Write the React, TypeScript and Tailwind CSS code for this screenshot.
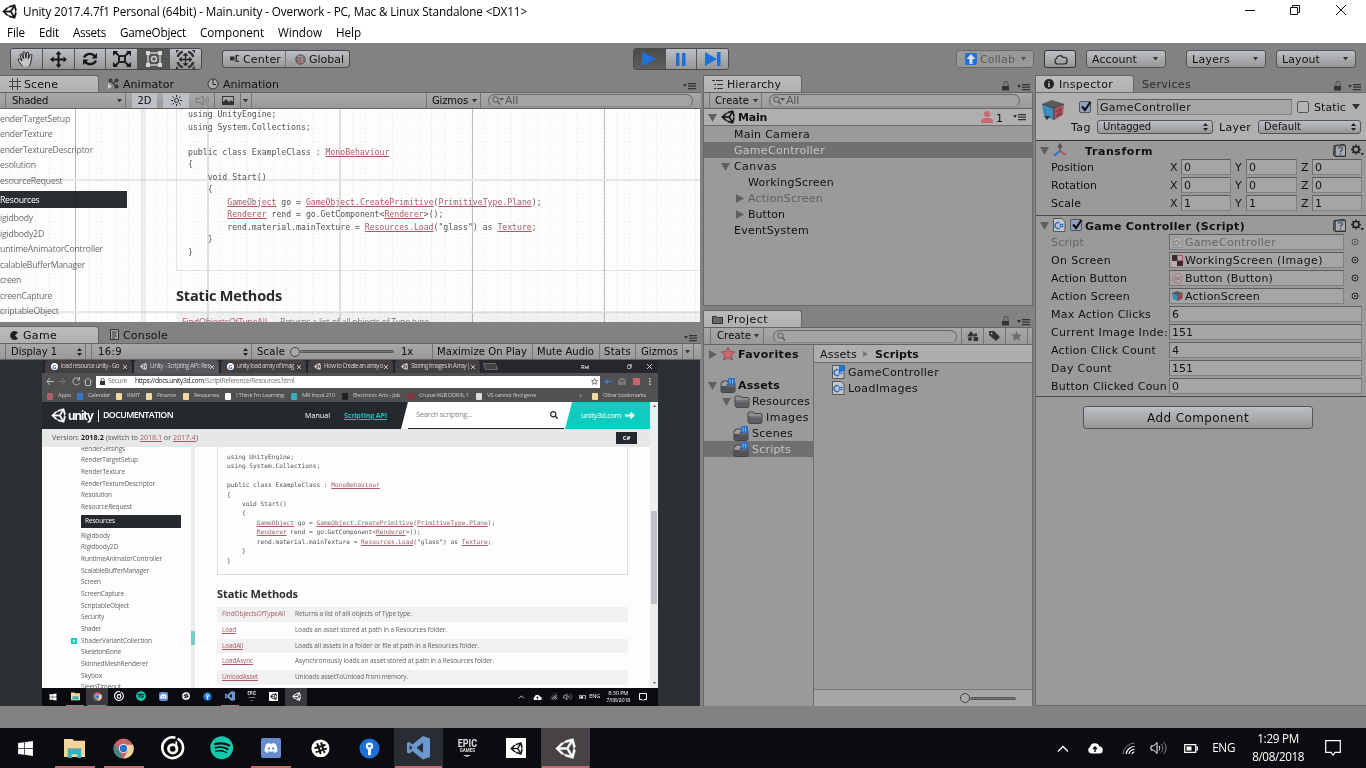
import React, { useLayoutEffect, useRef } from "react";
import { FaSpotify, FaDiscord, FaSearch, FaWindows } from "react-icons/fa";

/* Text set to a fixed measure by adjusting its tracking. */
function Fit({ w, c = "", u = false, children }: { w: number; c?: string; u?: boolean; children: string }) {
  const ref = useRef<HTMLSpanElement>(null);
  useLayoutEffect(() => {
    const el = ref.current;
    if (!el) return;
    el.style.letterSpacing = "0px";
    const natural = el.getBoundingClientRect().width;
    el.style.letterSpacing = (w - natural) / children.length + "px";
  }, [w, children]);
  return (
    <span className={"block shrink-0 whitespace-pre " + c} style={{ width: w }}>
      <span ref={ref} className={u ? "inline-block underline" : "inline-block"}>{children}</span>
    </span>
  );
}

type IconProps = { w: number; h?: number; vb?: string; c?: string; children: React.ReactNode };
function Svg({ w, h = w, vb, c = "", children }: IconProps) {
  return (
    <svg className={"block shrink-0 " + c} width={w} height={h} viewBox={vb ?? `0 0 ${w} ${h}`} fill="none" stroke="none">
      {children}
    </svg>
  );
}

const UNITY =
  "M498.11 206.4L445.31 14.72 248.2 66.08 219 116.14l-59.2-.43L15.54 256l144.28 140.32 59.17-.43 29.24 50 197.08 51.36 52.8-191.62-30-49.63zM223.77 124.2L374.55 86.51 288 232.33H114.87zm0 263.63l-108.9-108.16H288l86.55 145.81zm193 14L330.17 256l86.58-145.84L458.56 256z";
function Unity({ w, c = "", fill = "#111" }: { w: number; c?: string; fill?: string }) {
  return (
    <Svg w={w} vb="0 0 512 512" c={c}>
      <path d={UNITY} fill={fill} stroke={fill} strokeWidth="10" />
    </Svg>
  );
}
const Down = ({ c = "", w = 5 }: { c?: string; w?: number }) => (
  <Svg w={w} h={w * 0.7} vb="0 0 10 7" c={c}><path d="M0 0h10L5 7z" fill="#333" /></Svg>
);
const UpDown = ({ c = "" }: { c?: string }) => (
  <Svg w={5} h={8} c={c}><path d="M2.5 0L5 3H0zM2.5 8L5 5H0z" fill="#222" /></Svg>
);
const Fold = ({ open = false, c = "" }: { open?: boolean; c?: string }) => (
  <Svg w={9} c={c}><path d={open ? "M0 1h9L4.500 9z" : "M1 0v9L9 4.500z"} fill="#606060" /></Svg>
);
const Menu = ({ c = "" }: { c?: string }) => (
  <Svg w={13} h={7} c={c}><path d="M0 1h4L2 4zM5 0h8v1.200H5zM5 2.500h8v1.200H5zM5 5h8v1.200H5z" fill="#333" /></Svg>
);
const Lock = ({ c = "" }: { c?: string }) => (
  <Svg w={9} h={10} c={c}><path d="M3 5V2.500a2 2 0 0 1 4 0V5" stroke="#555" strokeWidth="1.200" /><path d="M1 5h7v4.500H1z" fill="#333" /></Svg>
);
const Mag = ({ c = "", arrow = true }: { c?: string; arrow?: boolean }) => (
  <Svg w={13} h={9} c={c}>
    <circle cx="3.500" cy="3.500" r="2.700" stroke="#555" strokeWidth="1" />
    <path d="M5.500 5.500L8 8.500" stroke="#555" strokeWidth="1.300" />
    {arrow && <path d="M7 2h5L9.500 5z" fill="#555" />}
  </Svg>
);
const Script = ({ w = 14, dim = false, c = "" }: { w?: number; dim?: boolean; c?: string }) => (
  <Svg w={w} h={w} vb="0 0 14 14" c={c + (dim ? " opacity-40" : "")}>
    <path d="M1.500.5h8.500l3 3v10h-11.500z" fill="#c3c5c8" stroke="#555" />
    <path d="M7.500 5a3 3 0 1 0 .5 5" stroke={dim ? "#555" : "#1e6fd0"} strokeWidth="1.400" />
    <path d="M8.500 5.500v4M10.500 5.500v4M7.500 6.500h4M7.500 8.500h4" stroke={dim ? "#555" : "#1e6fd0"} strokeWidth=".8" />
  </Svg>
);
const Folder = ({ badge = false, c = "" }: { badge?: boolean; c?: string }) => (
  <Svg w={16} h={15} c={c}>
    {badge ? (
      <>
        <path d="M1 5.500L3 3h6v2h6v8.500l-1 1H2l-1-1z" fill="#515456" stroke="#444" />
        <path d="M1.500 6L3.500 3.500h4v2L6 8H1.500z" fill="#a0a0a0" />
        <path d="M6 8h9" stroke="#777" />
        <rect x="8" y="0" width="7" height="7" rx="1" fill="#2272cc" />
        <path d="M10 5.500v-4M12.500 1.500v4" stroke="#aaccee" strokeWidth=".8" />
      </>
    ) : (
      <>
        <path d="M1 3.500L2 2h4.500l1 1.500H14l1 1V12l-1 1.500H2.500L1 12z" fill="#5c5f61" stroke="#484848" />
        <path d="M1.500 4l1-1.500H6l1 1.500h7v2H1.500z" fill="#8f8f8f" />
        <path d="M2 7h13" stroke="#858585" />
      </>
    )}
  </Svg>
);
const Cube = ({ w, c = "" }: { w: number; c?: string }) => (
  <Svg w={w} vb="0 0 22 22" c={c}>
    <path d="M0 4L10 0l12 4-10 5z" fill="#5b5b5b" />
    <path d="M0 4l12 4v12L2 16z" fill="#4580b8" />
    <path d="M22 4L12 8v12l9-5z" fill="#b5535b" />
    <path d="M3 7l3 2v6M9 9v8" stroke="#27a9c8" strokeWidth="1.500" />
    <path d="M14 12l6-4M14 17l5-7M16 16l4-3M12 8v12" stroke="#5a3035" />
    <path d="M0 4l12 4 10-4" stroke="#444" />
  </Svg>
);

function Tab({ w, children }: { w: string; children: React.ReactNode }) {
  return <div className={"flex h-[17px] shrink-0 items-center rounded-tr-[3px] border-t border-r border-[#666] bg-gradient-to-b from-[#bcbcc0] to-[#b0b0b0] " + w}>{children}</div>;
}
function Bar({ h, children }: { h: string; children: React.ReactNode }) {
  return <div className={"flex shrink-0 items-center border-y border-[#646464] bg-gradient-to-b from-[#a9a9a9] to-[#989898] text-[10px] font-medium text-[#0c0c0c] " + h}>{children}</div>;
}
const Sep = ({ c = "" }: { c?: string }) => <div className={"h-full w-px shrink-0 bg-[#757575] " + c} />;

const metal = "bg-gradient-to-b from-[#bcc0c5] to-[#969696]";
function TopBtn({ label, w, c }: { label: string; w: number; c: string }) {
  return (
    <div className={"flex h-[18px] w-[80px] shrink-0 items-center justify-between rounded-[3px] border border-[#555] pr-[7px] pl-[5px] " + metal + " " + c}>
      <Fit w={w}>{label}</Fit><Down />
    </div>
  );
}

function TopToolbar() {
  const tools = [
    <Svg w={18} vb="0 0 18 18"><path d="M5.500 16.500C4 13.500 1.500 12 1 10c-.2-1.500 1.500-1.700 2.300-.5L5 11 3.200 5.500c-.4-1.500 1.400-2 1.900-.5l1.300 3.500L6 3c-.1-1.700 2-1.700 2.200 0l.6 5.200L9.600 3c.2-1.500 2.200-1.300 2.100.3L11.300 8.700 13 5c.6-1.400 2.300-.8 1.900.8C14 9.500 14.500 13 12 16.500" stroke="#222" strokeWidth="1" fill="#c4c4c4" /></Svg>,
    <Svg w={17} vb="0 0 17 17"><path d="M8.500 0l3 3.500H9.500v4h4v-2L17 8.500l-3.500 3v-2h-4v4h2l-3 3.500-3-3.500h2v-4h-4v2L0 8.500l3.500-3v2h4v-4h-2z" fill="#161616" /></Svg>,
    <Svg w={16} vb="0 0 16 16"><path d="M2 6.500C4 2 10 1.500 13 5.500M14 9.500C12 14 6 14.500 3 10.500" stroke="#161616" strokeWidth="2.200" /><path d="M15 2v5.500H9.500zM1 14V8.500h5.500z" fill="#161616" /></Svg>,
    <Svg w={18} vb="0 0 18 18"><rect x="6" y="6" width="6" height="6" stroke="#161616" strokeWidth="1.800" /><path d="M0 1h5L3.700 2.300 6 4.600 4.600 6 2.300 3.700 0 6zM18 1h-5l1.300 1.300L12 4.600 13.400 6l2.300-2.300L18 6zM0 17h5l-1.300-1.300L6 13.400 4.600 12l-2.300 2.300L0 12zM18 17h-5l1.300-1.300-2.300-2.300 1.400-1.400 2.300 2.300L18 12z" fill="#161616" /></Svg>,
    <Svg w={18} vb="0 0 18 18"><path d="M3 1v16M15 1v16M1 3h16M1 15h16" stroke="#c8c8c8" strokeWidth="1.500" /><path d="M1 1h4v4H1zM13 1h4v4h-4zM1 13h4v4H1zM13 13h4v4h-4z" fill="#d4d4d4" /><circle cx="9" cy="9" r="2.500" stroke="#ccc" strokeWidth="1.500" /></Svg>,
    <Svg w={19} vb="0 0 18 18"><path d="M9 4v10M4 9h10M7 5.500l2-2 2 2M7 12.500l2 2 2-2M5.500 7l-2 2 2 2M12.500 7l2 2-2 2" stroke="#222" strokeWidth="1.200" /><path d="M1.500 6.500a8 8 0 0 1 5-5M16.500 6.500a8 8 0 0 0-5-5M1.500 11.500a8 8 0 0 0 5 5M16.500 11.500a8 8 0 0 1-5 5" stroke="#333" strokeWidth="2.200" /><path d="M0 0h3L0 3zM18 0h-3l3 3zM0 18h3l-3-3zM18 18h-3l3-3z" fill="#333" /></Svg>,
  ];
  return (
    <div className="flex h-[32px] shrink-0 items-center">
      <div className="ml-[10px] flex h-[22px] w-[192px] shrink-0 overflow-hidden rounded-[3px] border border-[#4a4a4a]">
        {tools.map((t, i) => (
          <div key={i} className={"flex flex-1 items-center justify-center border-r border-[#555] last:border-r-0 " + (i === 4 ? "bg-[#555]" : metal)}>{t}</div>
        ))}
      </div>
      <div className={"ml-[20px] flex h-[18px] w-[128px] shrink-0 items-center rounded-[3px] border border-[#4a4a4a] " + metal}>
        <Svg w={10} h={8} c="ml-[7px]"><path d="M0 1.500h4.500v4H0zM5.500 0H9v1.300H7v4.400h2V7H5.500z" fill="#333" /></Svg>
        <Fit w={38} c="ml-[3px]">Center</Fit>
        <Sep c="ml-[4px] bg-[#222]" />
        <Svg w={11} c="ml-[9px]"><circle cx="5.500" cy="5.500" r="4.700" stroke="#444" /><path d="M5.500 1v9M1 4h9M1 7h9M3 2c-1 2-1 5 0 7M8 2c1 2 1 5 0 7" stroke="#555" strokeWidth=".7" /><path d="M4 3v5h5" stroke="#c2606a" strokeWidth="1.500" /></Svg>
        <Fit w={35} c="ml-[3px]">Global</Fit>
      </div>
      <div className="ml-[283px] flex h-[22px] w-[96px] shrink-0 overflow-hidden rounded-[3px] border border-[#4a4a4a]">
        <div className="flex flex-1 items-center justify-center bg-gradient-to-b from-[#4b4b4b] to-[#5f5f5f]"><Svg w={16} h={14}><path d="M1 0l14 7-14 7z" fill="#1b72d8" /></Svg></div>
        <div className={"flex flex-1 items-center justify-center border-x border-[#555] " + metal}><Svg w={10} h={13}><path d="M0 0h3.500v13H0zM6 0h3.500v13H6z" fill="#1b72d8" /></Svg></div>
        <div className={"flex flex-1 items-center justify-center " + metal}><Svg w={16} h={14}><path d="M0 0l12 7-12 7zM12 0h3.500v14H12z" fill="#1b72d8" /></Svg></div>
      </div>
      <div className="ml-[227px] flex h-[18px] w-[78px] shrink-0 items-center rounded-[3px] border border-[#6a6a6a] bg-[#989898] text-[#5c5c5c]">
        <div className="ml-[8px] flex h-[12px] w-[12px] items-center justify-center rounded-[2px] bg-[#2273cf]"><Svg w={10}><path d="M5 0l4.500 5H6.500v5h-3V5H.5z" fill="#dde" /></Svg></div>
        <Fit w={35} c="ml-[3px]">Collab</Fit><Down c="ml-[6px] opacity-70" />
      </div>
      <div className={"ml-[10px] flex h-[18px] w-[32px] shrink-0 items-center justify-center rounded-[3px] border border-[#333] " + metal}>
        <Svg w={15} h={11}><path d="M4 10a3 3 0 0 1-.5-5.500A3.500 3.500 0 0 1 10 3.500 3 3 0 0 1 14 7c0 2-1 3-3 3z" stroke="#222" strokeWidth="1.200" /></Svg>
      </div>
      <TopBtn label="Account" w={45} c="ml-[10px]" />
      <TopBtn label="Layers" w={38} c="ml-[20px]" />
      <TopBtn label="Layout" w={38} c="ml-[10px]" />
    </div>
  );
}

function Search({ c, text = "", arrow = true }: { c: string; text?: string; arrow?: boolean }) {
  return (
    <div className={"flex h-[13px] shrink-0 items-center rounded-full border border-[#666] border-b-[#888] bg-[#a4a4a4] pl-[3px] text-[11px] font-normal text-[#555] " + c}>
      <Mag arrow={arrow} />{text && <Fit w={13} c="mt-[-1px]">{text}</Fit>}
    </div>
  );
}

const sceneTop: [string, number][] = [["enderTargetSetup", 70], ["enderTexture", 52.5], ["enderTextureDescriptor", 93], ["esolution", 36], ["esourceRequest", 62.5]];
const sceneBottom: [string, number][] = [["igidbody", 33], ["igidbody2D", 44], ["untimeAnimatorController", 103], ["calableBufferManager", 85], ["creen", 21], ["creenCapture", 52], ["criptableObject", 58.5]];

const link = "text-[#ad5a65]";
/* Segments starting with "@" are links. */
const code: string[][] = [
  ["using UnityEngine;"],
  ["using System.Collections;"],
  [" "],
  ["public class ExampleClass : ", "@MonoBehaviour"],
  ["{"],
  ["    void Start()"],
  ["    {"],
  ["        ", "@GameObject", " go = ", "@GameObject.CreatePrimitive", "(", "@PrimitiveType.Plane", ");"],
  ["        ", "@Renderer", " rend = go.GetComponent<", "@Renderer", ">();"],
  ["        rend.material.mainTexture = ", "@Resources.Load", '("glass") as ', "@Texture", ";"],
  ["    }"],
  ["}"],
];
function Code({ c, row }: { c: string; row: string }) {
  return (
    <div className={"flex shrink-0 flex-col font-['DejaVu_Sans_Mono',monospace] leading-none whitespace-pre text-[#505358] " + c}>
      {code.map((line, i) => (
        <div key={i} className={"flex shrink-0 items-center " + row}>
          {line.map((s, j) => s[0] === "@" ? <span key={j} className={link + " underline"}>{s.slice(1)}</span> : <span key={j}>{s}</span>)}
        </div>
      ))}
    </div>
  );
}

function SceneView() {
  const minor = Array.from({ length: 54 }, (_, i) => Math.round(9 + i * 13.2) + 0.5);
  const rows = Array.from({ length: 17 }, (_, i) => 6 + i * 13.2);
  return (
    <div className="relative flex h-[213px] w-[700px] shrink-0 overflow-hidden bg-[#fdfdfd] font-['Open_Sans',sans-serif]">
      <div className="flex w-[141px] shrink-0 flex-col pt-[2.500px] text-[8.700px] leading-none text-[#6a6c70]">
        {sceneTop.map(([t, w]) => <div key={t} className="flex h-[15.500px] shrink-0 items-center"><Fit w={w}>{t}</Fit></div>)}
        <div className="mt-[2px] mb-[3px] flex h-[17px] w-[127px] shrink-0 items-center bg-[#2a2d31] pt-px text-white"><Fit w={39.5}>Resources</Fit></div>
        {sceneBottom.map(([t, w]) => <div key={t} className="flex h-[15.500px] shrink-0 items-center"><Fit w={w}>{t}</Fit></div>)}
      </div>
      <div className="w-[5px] shrink-0 bg-[#ededed]" />
      <div className="ml-[30px] flex w-[530px] shrink-0 flex-col">
        <div className="h-[162px] shrink-0 border-b border-l border-[#e2e2e2]"><Code c="ml-[11px] mt-[-1px] text-[8.170px]" row="h-[12.500px]" /></div>
        <div className="mt-[14px] flex h-[22px] shrink-0 items-center text-[14.500px] font-bold text-[#27292d]"><Fit w={106}>Static Methods</Fit></div>
        <div className="mt-[5px] flex h-[20px] shrink-0 items-center bg-[#f1f1f1] pl-[6px] text-[8.700px] text-[#777]"><Fit w={85} c={link}>FindObjectsOfTypeAll</Fit><Fit w={151} c="ml-[13px]">Returns a list of all objects of Type type.</Fit></div>
      </div>
      <svg className="absolute inset-0 mix-blend-multiply" width="700" height="213">
        {minor.map((x) => <path key={x} d={`M${x} 0V213`} stroke="#e3e5e7" strokeWidth="1" strokeDasharray="1 3" />)}
        {rows.map((y) => <path key={y} d={`M0 ${Math.round(y) + 0.5}H700`} stroke="#ebecee" strokeWidth="1" strokeDasharray="1 5" />)}
        <path d="M75.500 0V213M472.500 0V213M604.500 0V213" stroke="#bcbdc5" strokeWidth="1" />
        <path d="M208 0V213M340 0V213" stroke="#e0e1e4" strokeWidth="2" />
        <path d="M0 71H700M0 203H700" stroke="#e8e9eb" strokeWidth="2" />
      </svg>
    </div>
  );
}

function ScenePanel() {
  return (
    <div className="flex h-[247px] shrink-0 flex-col">
      <div className="flex h-[17px] shrink-0 items-center">
        <Tab w="w-[99px]">
          <Svg w={12} c="ml-[9px]"><path d="M3.500 0v12M8.500 0v12M0 3.500h12M0 8.500h12" stroke="#444" /></Svg><Fit w={34} c="ml-[3px]">Scene</Fit>
        </Tab>
        <Svg w={11} c="ml-[9px]"><circle cx="2.500" cy="2.500" r="2" fill="#333" /><circle cx="8.500" cy="2.500" r="2" fill="#333" /><circle cx="8.500" cy="8.500" r="2" fill="#333" /><path d="M2 2l6 6.500M8.500 2L5 6" stroke="#444" strokeWidth="1.300" /><path d="M0 5l4 3.500L0 11z" fill="#ccc" /></Svg>
        <Fit w={51} c="mt-px ml-[4px]">Animator</Fit>
        <Svg w={12} c="ml-[33px]"><circle cx="6" cy="6" r="5" stroke="#333" fill="#aaa" /><path d="M6 2v4.500h3" stroke="#222" /></Svg>
        <Fit w={56} c="mt-px ml-[4px]">Animation</Fit>
        <Menu c="mt-[6px] ml-[404px]" />
      </div>
      <Bar h="h-[17px]">
        <Sep c="ml-[5px]" /><Fit w={36} c="ml-[6px]">Shaded</Fit><Down c="ml-[69px]" /><Sep c="ml-[3px]" />
        <div className="ml-[6px] flex h-full w-[25px] items-center justify-center bg-[#bcc0c4]"><Fit w={14}>2D</Fit></div>
        <div className="ml-[6px] flex h-full w-[26px] items-center justify-center bg-[#bcc0c4]"><Svg w={11}><circle cx="5.500" cy="5.500" r="2" stroke="#222" /><path d="M5.500 0v2M5.500 9v2M0 5.500h2M9 5.500h2M1.500 1.500L3 3M8 8l1.500 1.500M9.500 1.500L8 3M3 8L1.500 9.500" stroke="#222" /></Svg></div>
        <Svg w={14} h={11} c="ml-[6px]"><path d="M1 3.500h3L8 1v9L4 7.500H1z" stroke="#777" /><path d="M10 3c1.500 1.500 1.500 3.500 0 5M12 1c2 3 2 6 0 9" stroke="#808080" /></Svg>
        <Sep c="ml-[5px]" /><Svg w={12} h={9} c="ml-[7px]"><path d="M0 0h12v9H0z" fill="#333" /><path d="M1 6l3-3 3 3 2-2 2 2V1H1z" fill="#aaa" /></Svg><Sep c="ml-[6px]" /><Down c="ml-[2px]" /><Sep c="ml-[3px]" />
        <Sep c="ml-[174px]" /><Fit w={36} c="ml-[5px]">Gizmos</Fit><Down c="ml-[4px]" /><Sep c="ml-[3px]" />
        <Search c="ml-[7px] w-[205px]" text="All" />
      </Bar>
      <SceneView />
    </div>
  );
}

const listA: [string, number][] = [["RenderSettings", 44], ["RenderTargetSetup", 57], ["RenderTexture", 44], ["RenderTextureDescriptor", 74], ["Resolution", 31], ["ResourceRequest", 51]];
const listB: [string, number][] = [["Rigidbody", 29], ["Rigidbody2D", 37], ["RuntimeAnimatorController", 81], ["ScalableBufferManager", 68], ["Screen", 20], ["ScreenCapture", 43], ["ScriptableObject", 48], ["Security", 23], ["Shader", 20], ["ShaderVariantCollection", 71], ["SkeletonBone", 40], ["SkinnedMeshRenderer", 67], ["Skybox", 21], ["SleepTimeout", 40]];
const methods: [string, number, string, number][] = [
  ["FindObjectsOfTypeAll", 63, "Returns a list of alll objects of Type type.", 117],
  ["Load", 14, "Loads an asset stored at path in a Resources folder.", 152],
  ["LoadAll", 21, "Loads all assets in a folder or file at path in a Resources folder.", 184],
  ["LoadAsync", 31, "Asynchronously loads an asset stored at path in a Resources folder.", 199],
  ["UnloadAsset", 36, "Unloads assetToUnload from memory.", 113],
];

function ChromeTab({ label, w, x, on = false, icon }: { label: string; w: number; x: string; on?: boolean; icon: string }) {
  return (
    <div className={"flex h-[13px] shrink-0 items-center rounded-t-[4px] border-x border-[#202226] text-[6.200px] text-[#d0d0d0] " + (on ? "bg-[#55575a] " : "bg-[#443f43] ") + x}>
      {icon === "G" ? <div className="ml-[6px] flex h-[7px] w-[7px] shrink-0 items-center justify-center rounded-full bg-white text-[6px] font-bold text-[#3a6cc0]">G</div> : <Unity w={7} c="ml-[6px]" fill="#eee" />}
      <Fit w={w} c="ml-[3px]">{label}</Fit><Svg w={4} c="mr-[5px] ml-auto"><path d="M0 0l4 4M4 0L0 4" stroke="#ccc" strokeWidth=".9" /></Svg>
    </div>
  );
}

const Mark = ({ m, color, w, t }: { m: string; color: string; w: number; t: string }) => (
  <>
    <div className={"h-[7px] w-[6px] shrink-0 rounded-[1px] " + color + " " + m} />
    <Fit w={w} c="ml-[5px]">{t}</Fit>
  </>
);

function Browser() {
  return (
    <div className="ml-[42px] flex h-[346px] w-[616px] shrink-0 flex-col overflow-hidden bg-[#fdfdfd] font-['Open_Sans',sans-serif] leading-none">
      <div className="flex h-[13px] shrink-0 items-center bg-[#26282c]">
        <ChromeTab x="ml-[2px] w-[89px]" w={58} label="load resource unity - Go" icon="G" />
        <ChromeTab x="w-[87px]" w={60} label="Unity - Scripting API: Res" on icon="U" />
        <ChromeTab x="w-[87px]" w={57} label="unity load array of imag" icon="G" />
        <ChromeTab x="w-[87px]" w={59} label="How to Create an array o" icon="U" />
        <ChromeTab x="w-[87px]" w={59} label="Storing Images in Array |" icon="U" />
        <div className="ml-[3px] h-[7px] w-[13px] shrink-0 skew-x-[20deg] border border-[#666] bg-[#443f43]" />
        <span className="ml-[84px] text-[6px] text-white">Rel</span>
        <Svg w={5} c="ml-[37px]"><path d="M.5 1.500h3v3h-3zM1.500 1V.5h3v3H4" stroke="#ccc" strokeWidth=".7" /></Svg>
        <Svg w={5} c="ml-[15px]"><path d="M0 0l5 5M5 0L0 5" stroke="#ddd" strokeWidth=".9" /></Svg>
      </div>
      <div className="flex h-[17px] shrink-0 items-center bg-[#4e5052]">
        <Svg w={46} h={9} c="ml-[4px]"><path d="M8 4.500H1M4 1L1 4.500 4 8" stroke="#bbb" /><path d="M13 4.500h6M16 1l3 3.500L16 8" stroke="#777" /><path d="M33 2a3.500 3.500 0 1 0 .5 4M33.500 0v3H31" stroke="#bbb" /><path d="M38 4.500L42 1l4 3.500M39.500 4v4.500h5V4" stroke="#bbb" /></Svg>
        <div className="ml-[4px] flex h-[12px] w-[504px] shrink-0 items-center bg-white text-[6.700px] text-[#777]">
          <Svg w={5} h={7} c="ml-[4px]"><path d="M0 3h5v4H0z" fill="#333" /><path d="M1 3V1.500a1.500 1.500 0 0 1 3 0V3" stroke="#333" strokeWidth=".8" /></Svg>
          <Fit w={19} c="ml-[3px]">Secure</Fit>
          <Fit w={69} c="ml-[8px] text-[#222]">https://docs.unity3d.com</Fit><Fit w={90}>/ScriptReference/Resources.html</Fit>
          <Svg w={7} c="mr-[2px] ml-auto"><path d="M3.500.5l.9 2 2.100.2-1.600 1.400.5 2.200-1.900-1.200-1.900 1.200.5-2.200L.5 2.700l2.100-.2z" stroke="#444" strokeWidth=".7" /></Svg>
        </div>
        <Svg w={8} h={7} c="ml-[4px]"><path d="M0 4l4-3v2h4v1H4v2z" fill="#3a80d0" /></Svg>
        <Svg w={9} h={7} c="ml-[6px]"><path d="M0 0h8v7H0z" fill="#777" /><path d="M0 0l4 4 4-4" stroke="#444" /></Svg>
        <div className="ml-[6px] h-[7px] w-[7px] shrink-0 bg-[#c96570]" />
        <Svg w={2} h={7} c="ml-[9px]"><path d="M0 0h1.500v1.500H0zM0 2.700h1.500v1.500H0zM0 5.400h1.500v1.500H0z" fill="#ccc" /></Svg>
      </div>
      <div className="flex h-[12px] shrink-0 items-center bg-[#4e5052] text-[5.900px] text-[#c8c8c8]">
        <Mark m="ml-[5px]" color="bg-[#b35b68]" w={13} t="Apps" />
        <Mark m="ml-[6px]" color="bg-[#3578c8]" w={22} t="Calendar" />
        <Mark m="ml-[6px]" color="bg-[#f2d9a0]" w={13} t="RMIT" />
        <Mark m="ml-[6px]" color="bg-[#f2d9a0]" w={19} t="Finance" />
        <Mark m="ml-[7px]" color="bg-[#f2d9a0]" w={25} t="Resources" />
        <Mark m="ml-[6px]" color="bg-white" w={48} t="I Think I'm Learning" />
        <Mark m="ml-[7px]" color="bg-[#38aebd]" w={33} t="MR Input 210" />
        <Mark m="ml-[7px]" color="bg-[#222]" w={47} t="Electronic Arts - Job" />
        <Mark m="ml-[8px]" color="bg-[#853540]" w={50} t="Crucial 4GB DDR3L 1" />
        <Mark m="ml-[7px]" color="bg-[#ddd]" w={49} t="VS cannot find gene" />
        <span className="ml-[43px]">»</span>
        <Mark m="ml-[10px]" color="bg-[#f2d9a0]" w={43} t="Other bookmarks" />
      </div>
      <div className="flex h-[286px] shrink-0">
        <div className="flex w-[608px] shrink-0 flex-col overflow-hidden">
          <div className="flex h-[27px] shrink-0 items-center bg-[#25282c] text-white">
            <Unity w={15} c="ml-[9px]" fill="#fff" />
            <Fit w={25} c="ml-[2px] font-['Inter',sans-serif] text-[12px] font-bold">unity</Fit>
            <div className="ml-[5px] h-[12px] w-px shrink-0 bg-white" />
            <Fit w={70} c="ml-[4px] text-[8.800px] font-semibold">DOCUMENTATION</Fit>
            <Fit w={25} c="ml-[132px] text-[7.200px]">Manual</Fit>
            <Fit w={43} u c="ml-[14px] text-[7px] font-bold text-[#12c5bb]">Scripting API</Fit>
            <div className="ml-[14px] flex h-full w-[174px] shrink-0 items-center bg-white [clip-path:polygon(4%_0,100%_0,100%_100%,0_100%)]">
              <div className="ml-[7px] flex h-full w-[156px] items-center border-b border-[#222]"><Fit w={56} c="ml-[8px] text-[7.500px] text-[#888]">Search scripting...</Fit><FaSearch className="mr-[6px] ml-auto size-[8px] text-[#222]" /></div>
            </div>
            <div className="ml-[-10px] flex h-full w-[89px] shrink-0 items-center bg-[#10ccc0] [clip-path:polygon(8%_0,100%_0,100%_100%,0_100%)]"><Fit w={40} c="ml-[16px] text-[7.500px]">unity3d.com</Fit><Svg w={10} h={7} c="ml-[4px]"><path d="M0 3.500h8M5.500.5l3 3-3 3" stroke="#fff" strokeWidth="1.800" /></Svg></div>
          </div>
          <div className="flex h-[18px] shrink-0 items-center bg-[#e6e8e8] text-[7.200px] text-[#555]">
            <Fit w={27} c="ml-[10px]">Version:</Fit><Fit w={23} c="ml-[2px] font-bold text-[#222]">2018.2</Fit><Fit w={34} c="ml-[2px]">(switch to </Fit><Fit w={22} u c={link}>2018.1</Fit><Fit w={11}> or </Fit><Fit w={23} u c={link}>2017.4</Fit><span>)</span>
            <div className="mr-[13px] ml-auto flex h-[12px] w-[21px] items-center justify-center bg-[#25282c] text-[6px] font-bold text-white">C#</div>
          </div>
          <div className="flex h-[241px] shrink-0 overflow-hidden">
            <div className="mt-[-4px] flex w-[149px] shrink-0 flex-col pl-[39px] text-[6.500px] text-[#606266]">
              {listA.map(([t, w]) => <div key={t} className="flex h-[11.700px] shrink-0 items-center"><Fit w={w}>{t}</Fit></div>)}
              <div className="my-[2px] flex h-[12.800px] w-[100px] shrink-0 items-center bg-[#25282c] pl-[4px] text-white"><Fit w={30}>Resources</Fit></div>
              {listB.map(([t, w]) => (
                <div key={t} className="flex h-[11.700px] shrink-0 items-center">
                  {t === "ShaderVariantCollection" && <Svg w={6} c="mr-[4px] ml-[-10px]"><path d="M0 0h6v6H0z" fill="#12c9bd" /><path d="M1.500 3h3M3 1.500v3" stroke="#fff" strokeWidth=".8" /></Svg>}
                  <Fit w={w}>{t}</Fit>
                </div>
              ))}
            </div>
            <div className="flex w-[4px] shrink-0 flex-col bg-[#ececec] pt-[184px]"><div className="h-[14px] bg-[#7accc8]" /></div>
            <div className="ml-[22px] flex w-[411px] shrink-0 flex-col">
              <div className="h-[128px] shrink-0 border-x border-b border-[#dcdcdc]"><Code c="ml-[9px] mt-[5px] text-[6.200px]" row="h-[9.470px]" /></div>
              <div className="mt-[8px] flex h-[20px] shrink-0 items-center text-[11px] font-bold text-[#2b2d30]"><Fit w={81}>Static Methods</Fit></div>
              <div className="mt-[4px] flex shrink-0 flex-col text-[6.500px] text-[#606266]">
                {methods.map(([a, aw, b, bw]) => (
                  <div key={a} className="flex h-[15.750px] shrink-0 items-center border-b border-white pl-[5px] odd:bg-[#f1f1f1]">
                    <div className="w-[73px] shrink-0"><Fit w={aw} u={a !== "FindObjectsOfTypeAll"} c={link}>{a}</Fit></div><Fit w={bw}>{b}</Fit>
                  </div>
                ))}
              </div>
            </div>
          </div>
        </div>
        <div className="flex w-[8px] shrink-0 flex-col items-center bg-[#eeeeee]">
          <Svg w={3} h={2} c="mt-[3px]"><path d="M0 2h3L1.500 0z" fill="#555" /></Svg>
          <div className="mt-[104px] h-[93px] w-[6px] shrink-0 bg-[#c1c2c7]" />
          <Svg w={3} h={2} c="mt-[78px]"><path d="M0 0h3L1.500 2z" fill="#555" /></Svg>
        </div>
      </div>
      <MiniTaskbar />
    </div>
  );
}

const Explorer = () => (
  <><path d="M0 1h9l1.500 2H22v17H0z" fill="#f3d59a" /><path d="M4 11h14v10h-4v-4H8v4H4z" fill="#2ab5c4" /><path d="M4 11h14v2H4z" fill="#6a9fb0" /></>
);
const ChromeMark = () => (
  <><circle cx="11" cy="11" r="10.500" fill="#c8616b" /><path d="M1.500 6.500L8 16l2 5.500A10.500 10.500 0 0 1 1.500 6.500" fill="#3f8a86" /><path d="M11 7h10a10.500 10.500 0 0 1-10 14.500l4.500-8z" fill="#f1d39a" /><circle cx="11" cy="11" r="5" fill="#eee" /><circle cx="11" cy="11" r="3.900" fill="#2873cc" /></>
);
const Disc = () => (
  <><path d="M13.500 1.600a9.700 9.700 0 1 0 2 .8" stroke="#fff" strokeWidth="2.400" /><circle cx="11" cy="12" r="4" stroke="#fff" strokeWidth="2.600" /><path d="M14.300 12V5" stroke="#fff" strokeWidth="1.600" /></>
);
const Hash = () => (
  <><circle cx="11" cy="11" r="10.500" fill="#fff" /><path d="M7.500 6l3.500 10.500M12 4.800l3.500 10.500M5 10.500L16 7M6.500 15L17.500 11.500" stroke="#111" strokeWidth="2.400" strokeLinecap="round" /></>
);
const Key = () => (
  <><circle cx="11" cy="11" r="10.500" fill="#1d71d6" /><circle cx="11" cy="8.500" r="3.800" fill="#fff" /><path d="M9.500 10h3v8h-3z" fill="#fff" /><circle cx="11" cy="8.500" r="1.500" fill="#1d71d6" /></>
);
const VS = () => (
  <><path d="M15 0l7 2.500v17L15 22 5 14l-3 2.500-2-1v-9l2-1L5 8zM15 6l-6 5 6 5zM2.500 8.500v5L5 11z" fill="#6d97cf" fillRule="evenodd" /></>
);
const Epic = ({ small = false }: { small?: boolean }) => (
  <div className={"flex flex-col items-center font-['Roboto',sans-serif] leading-none font-bold text-[#ddd] " + (small ? "text-[4px]" : "text-[9px]")}>
    <span className="scale-y-125">EPIC</span><span className={small ? "text-[2px]" : "mt-[1px] text-[4.500px]"}>GAMES</span><Svg w={small ? 3 : 8} h={small ? 1 : 2} vb="0 0 8 2" c="mt-[2px]"><path d="M0 0h8L4 2z" fill="#ccc" /></Svg>
  </div>
);

function AppIcons({ s, small = false }: { s: number; small?: boolean }) {
  const cell = small ? "w-[22.100px]" : "w-[49.100px]";
  const under = [1, 2, 5, 8, 11];
  const icons = [
    <FaWindows size={small ? 8 : 17} color="#fff" />,
    <Svg w={s} vb="0 0 22 22"><Explorer /></Svg>,
    <Svg w={s} vb="0 0 22 22"><ChromeMark /></Svg>,
    <Svg w={s * 1.12} vb="0 0 22 22"><Disc /></Svg>,
    <FaSpotify size={s * 1.12} color="#14c9ae" />,
    <div className={"flex items-center justify-center rounded-[2px] bg-[#668cd0] " + (small ? "size-[9px]" : "size-[20px]")}><FaDiscord size={small ? 7 : 14} color="#fff" /></div>,
    <Svg w={s * 0.9} vb="0 0 22 22"><Hash /></Svg>,
    <Svg w={s} vb="0 0 22 22"><Key /></Svg>,
    <Svg w={s * 1.12} vb="0 0 22 22"><VS /></Svg>,
    <Epic small={small} />,
    <div className={"flex items-center justify-center bg-white " + (small ? "size-[9px]" : "size-[20px]")}><Unity w={small ? 7 : 13} /></div>,
    <Unity w={small ? 9 : 21} fill="#fff" />,
  ];
  return (
    <>
      {icons.map((ic, i) => {
        const line = small ? [1, 2, 8].includes(i) : under.includes(i);
        const bg = small ? (i === 2 || i === 11 ? "bg-[#3b393d]" : "") : i === 8 ? "bg-[#292d33]" : i === 11 ? "bg-[#464245]" : "";
        return (
          <div key={i} className={"flex h-full shrink-0 flex-col items-center " + cell + " " + bg}>
            <div className={"flex flex-1 items-center justify-center " + (small ? "" : "pt-[2px]")}>{ic}</div>
            <div className={(small ? "h-px w-[18px] " : "h-[2px] " + (i > 7 ? "w-[47px] " : "w-[40px] ")) + (line ? "bg-[#c76a73]" : "bg-transparent")} />
          </div>
        );
      })}
    </>
  );
}

function Tray({ small = false }: { small?: boolean }) {
  const k = small ? 0.55 : 1;
  return (
    <>
      <Svg w={12 * k} h={7 * k} vb="0 0 12 7"><path d="M1 6.500l5-5 5 5" stroke="#fff" strokeWidth="1.300" /></Svg>
      <Svg w={16 * k} h={12 * k} vb="0 0 16 12" c={small ? "ml-[8px]" : "ml-[18px]"}><path d="M4 11.500A3.500 3.500 0 0 1 3 5a5 5 0 0 1 9.500-.5A3.500 3.500 0 0 1 12 11.500z" fill="#fff" /><path d="M8 5v5M6 7l2-2 2 2" stroke="#111" strokeWidth="1.500" /></Svg>
      <Svg w={14 * k} h={13 * k} vb="0 0 14 13" c={small ? "ml-[8px]" : "ml-[19px]"}><path d="M1 12A12 12 0 0 1 12.500 1" stroke="#777" /><path d="M4 12a9 9 0 0 1 8.500-7.500M7 12a5.500 5.500 0 0 1 5.500-4.500M10 12a2.500 2.500 0 0 1 2.500-2" stroke="#fff" strokeWidth="1.200" /></Svg>
      <Svg w={17 * k} h={14 * k} vb="0 0 17 14" c={small ? "ml-[6px]" : "ml-[14px]"}><path d="M1 5h2.500L7 1.500v11L3.500 9H1zM9 5c1 1.500 1 3 0 4.500" stroke="#fff" /><path d="M11 3c2.500 2.500 2.500 6 0 8.500M13.500 1c3.500 4 3.500 8 0 12" stroke="#888" /></Svg>
      <Svg w={14 * k} h={9 * k} vb="0 0 14 9" c={small ? "ml-[6px]" : "ml-[17px]"}><path d="M.7.700h11v7.600H.7zM12 3h1.500v3H12" stroke="#fff" strokeWidth="1.200" /><path d="M2.500 2.500h5v4h-5z" fill="#fff" /></Svg>
    </>
  );
}

function MiniTaskbar() {
  return (
    <div className="flex h-[18px] shrink-0 items-center bg-[#0a0b0e] text-[5.500px] leading-none text-white">
      <AppIcons s={9} small />
      <div className="ml-[211px] flex shrink-0 items-center"><Tray small /></div>
      <Fit w={11} c="ml-[3px]">ENG</Fit>
      <div className="ml-[6px] flex shrink-0 flex-col items-center gap-[2px]"><Fit w={20}>8:30 PM</Fit><Fit w={24}>7/08/2018</Fit></div>
      <Svg w={8} h={8} c="ml-[9px]"><path d="M.5.500h7v6H5l-1 1-1-1H.5z" stroke="#fff" /></Svg>
    </div>
  );
}

function GamePanel() {
  return (
    <div className="mt-[4px] flex shrink-0 flex-col">
      <div className="flex h-[17px] shrink-0 items-center">
        <Tab w="w-[99px]"><Svg w={9} c="ml-[10px]"><path d="M8 1.500A4.500 4.500 0 1 0 8 7.500L5 4.500z" fill="#222" /></Svg><Fit w={34} c="ml-[4px]">Game</Fit></Tab>
        <Svg w={9} h={11} c="ml-[11px]"><path d="M.5.500h8v10h-8z" stroke="#333" fill="#aaa" /><path d="M2 3h5M2 5h4M2 7h5M2 9h3" stroke="#333" /></Svg>
        <Fit w={45} c="mt-px ml-[4px]">Console</Fit><Menu c="mt-[8px] ml-[516px]" />
      </div>
      <Bar h="h-[17px]">
        <Sep c="ml-[5px]" /><Fit w={46} c="ml-[5px]">Display 1</Fit><UpDown c="ml-[20px]" /><Sep c="ml-[3px]" /><Sep c="ml-[5px]" />
        <Fit w={24} c="ml-[6px]">16:9</Fit><UpDown c="ml-[121px]" /><Sep c="ml-[3px]" /><Fit w={28} c="mt-px ml-[5px]">Scale</Fit>
        <div className="ml-[5px] size-[10px] shrink-0 rounded-full border border-[#444] bg-[#aaa]" /><div className="h-[3px] w-[94px] shrink-0 rounded border border-[#555] bg-[#777]" />
        <Fit w={12} c="mt-px ml-[7px]">1x</Fit><Sep c="ml-[19px]" /><Fit w={90} c="ml-[4px]">Maximize On Play</Fit><Sep c="ml-[5px]" /><Fit w={57} c="ml-[4px]">Mute Audio</Fit><Sep c="ml-[5px]" />
        <Fit w={27} c="ml-[4px]">Stats</Fit><Sep c="ml-[4px]" /><Fit w={37} c="ml-[5px]">Gizmos</Fit><Sep c="ml-[4px]" /><Down c="ml-[2px]" /><Sep c="ml-[3px]" />
      </Bar>
      <div className="flex h-[346px] w-[700px] shrink-0 bg-[#2c3034]"><Browser /></div>
    </div>
  );
}

function HRow({ t, w, pad, color = "", fold }: { t: string; w: number; pad: string; color?: string; fold?: "open" | "closed" }) {
  return (
    <div className={"flex h-[16px] shrink-0 items-center " + color}>
      <div className={"flex shrink-0 justify-end pr-[4px] " + pad}>{fold && <Fold open={fold === "open"} />}</div><Fit w={w}>{t}</Fit>
    </div>
  );
}

function MiddleColumn() {
  return (
    <div className="ml-[2px] flex w-[330px] shrink-0 flex-col">
      <div className="flex h-[17px] shrink-0 items-center">
        <Tab w="w-[99px] border-l"><Svg w={11} h={9} c="ml-[8px]"><path d="M0 .5h3M4 .5h7M2 4.500h2M5 4.500h6M2 8.500h2M5 8.500h6" stroke="#333" /></Svg><Fit w={54} c="ml-[4px]">Hierarchy</Fit></Tab>
        <Lock c="mt-[5px] ml-[199px]" /><Menu c="mt-[7px] ml-[7px]" />
      </div>
      <div className="flex h-[214px] shrink-0 flex-col border-x border-b border-[#6a6a6a] bg-[#9a9a9a]">
        <Bar h="h-[17px]"><Sep c="ml-[5px]" /><Fit w={34} c="ml-[5px]">Create</Fit><Down c="ml-[4px]" /><Sep c="ml-[3px]" /><Search c="ml-[7px] w-[251px]" text="All" /></Bar>
        <div className="flex h-[17px] shrink-0 items-center border-b border-[#6d6d6d] bg-[#b0b0b0]">
          <Fold open c="ml-[4px]" /><Unity w={14} c="ml-[4px]" /><Fit w={29} c="mt-px ml-[3px] font-bold">Main</Fit>
          <Svg w={12} h={12} c="ml-[214px]"><circle cx="6" cy="3" r="3" fill="#cb6971" /><path d="M0 12V9l3-2h6l3 2v3z" fill="#cb6971" /></Svg><Fit w={7} c="ml-[3px] mt-[3px]">1</Fit><Menu c="ml-[10px]" />
        </div>
        <HRow t="Main Camera" w={76} pad="w-[30px]" />
        <HRow t="GameController" w={91} pad="w-[30px]" color="bg-[#707070] text-[#c4c6cc]" />
        <HRow t="Canvas" w={43} pad="w-[30px]" fold="open" />
        <HRow t="WorkingScreen" w={86} pad="w-[44px]" />
        <HRow t="ActionScreen" w={75} pad="w-[44px]" fold="closed" color="text-[#5e5e5e]" />
        <HRow t="Button" w={37} pad="w-[44px]" fold="closed" />
        <HRow t="EventSystem" w={75} pad="w-[30px]" />
      </div>
      <div className="mt-[4px] flex h-[17px] shrink-0 items-center">
        <Tab w="w-[99px] border-l"><Svg w={11} h={9} c="ml-[8px]"><path d="M.5 1.500h4l1 1h5v6H.5z" fill="#666" stroke="#333" /></Svg><Fit w={41} c="ml-[4px]">Project</Fit></Tab>
        <Lock c="mt-[5px] ml-[199px]" /><Menu c="mt-[7px] ml-[7px]" />
      </div>
      <div className="flex h-[379px] shrink-0 flex-col border-x border-[#6a6a6a] bg-[#9a9a9a]">
        <Bar h="h-[18px]">
          <Sep c="ml-[6px]" /><Fit w={34} c="ml-[6px]">Create</Fit><Down c="ml-[3px]" /><Sep c="ml-[4px]" /><Search c="ml-[9px] w-[184px]" arrow={false} />
          <Sep c="ml-[4px]" /><Svg w={11} h={10} c="ml-[5px]"><path d="M4 0l4 5.500H0z" fill="#333" /><path d="M6.500 6h4.500v4H6.500z" fill="#333" /><circle cx="8.700" cy="3.800" r="1.600" fill="#333" /><circle cx="3" cy="8" r="2" fill="#333" /></Svg>
          <Sep c="ml-[5px]" /><Svg w={11} h={10} c="ml-[5px]"><path d="M0 0h5l6 6-4 4-7-6z" fill="#333" /><circle cx="2.500" cy="2.500" r="1" fill="#aaa" /></Svg>
          <Sep c="ml-[5px]" /><Svg w={11} h={10} c="ml-[5px]"><path d="M5.500 0l1.500 3.500 4 .2-3 2.500 1 3.800-3.500-2.200L2 10l1-3.800-3-2.500 4-.2z" fill="#6c6c6c" /></Svg><Sep c="ml-[5px]" />
        </Bar>
        <div className="flex h-[361px]">
          <div className="flex w-[110px] shrink-0 flex-col border-r border-[#6d6d6d]">
            <div className="mt-[1px] flex h-[16px] shrink-0 items-center font-bold"><Fold c="ml-[4px]" /><Svg w={14} h={14} c="ml-[4px]"><path d="M7 .5l2 4 4.500.5-3.200 3 1 5L7 10.700 2.700 13l1-5L.5 5 5 4.500z" fill="#cb6971" stroke="#875057" /></Svg><Fit w={61} c="ml-[3px]">Favorites</Fit></div>
            <div className="mt-[15px] flex h-[16px] shrink-0 items-center font-bold"><Fold open c="ml-[4px]" /><Folder badge c="ml-[3px]" /><Fit w={42} c="ml-[2px]">Assets</Fit></div>
            <div className="flex h-[16px] shrink-0 items-center"><Fold open c="ml-[18px]" /><Folder c="ml-[3px]" /><Fit w={58} c="ml-[2px]">Resources</Fit></div>
            <div className="flex h-[16px] shrink-0 items-center"><Folder c="ml-[43px]" /><Fit w={43} c="ml-[3px]">Images</Fit></div>
            <div className="flex h-[16px] shrink-0 items-center"><Folder badge c="ml-[29px]" /><Fit w={41} c="ml-[3px]">Scenes</Fit></div>
            <div className="flex h-[16px] shrink-0 items-center bg-[#707070] text-[#c4c6cc]"><Folder badge c="ml-[29px]" /><Fit w={39} c="ml-[3px]">Scripts</Fit></div>
          </div>
          <div className="flex flex-1 flex-col">
            <div className="flex h-[18px] shrink-0 items-center border-b border-[#6d6d6d] bg-[#aeaeae]"><Fit w={37} c="mt-px ml-[6px]">Assets</Fit><Svg w={5} h={6} c="ml-[6px]"><path d="M0 0l5 3-5 3z" fill="#777" /></Svg><Fit w={44} c="mt-px ml-[7px] font-bold">Scripts</Fit></div>
            <div className="mt-[1px] flex h-[16px] shrink-0 items-center"><div className="relative ml-[17px] shrink-0"><Script /><div className="absolute top-0 right-0 size-[6px] bg-[#2272cc]" /></div><Fit w={91} c="ml-[3px]">GameController</Fit></div>
            <div className="flex h-[16px] shrink-0 items-center"><Script c="ml-[17px]" /><Fit w={70} c="ml-[3px]">LoadImages</Fit></div>
            <div className="mt-auto flex h-[17px] shrink-0 items-center border-t border-[#777] bg-[#a6a6a6]"><div className="ml-[146px] size-[10px] rounded-full border border-[#444] bg-[#aaa]" /><div className="h-[3px] w-[46px] rounded border border-[#555] bg-[#777]" /></div>
          </div>
        </div>
      </div>
    </div>
  );
}

function Check({ on = true, c = "" }: { on?: boolean; c?: string }) {
  return (
    <div className={"size-[12px] shrink-0 rounded-[2px] border border-[#555] " + (on ? "bg-[#8ea3c4] " : "bg-[#b4b4b4] ") + c}>
      {on && <Svg w={12} c="mt-[-1px]"><path d="M2 5.500l3 3.500L10.500 1" stroke="#0c0c0c" strokeWidth="2.200" /></Svg>}
    </div>
  );
}
const field = "flex h-[16px] shrink-0 items-center border border-[#808080] border-t-[#5c5c5c] border-l-[#6c6c6c] bg-[#a5a5a5] pl-[2px] ";
function Head({ children }: { children: React.ReactNode }) {
  return (
    <div className="flex h-[16px] shrink-0 items-center font-bold">
      <Fold open c="ml-[4px]" />{children}
      <Svg w={13} h={13} c="ml-auto"><path d="M1 1.500L11 .5l1.500 1v11H2L.5 11z" fill="#55585b" stroke="#333" /><path d="M3 2.500h9v9H3z" fill="#a5acb5" /><path d="M5.500 5c0-2 4-2 4 0 0 1.500-2 1-2 3M7.500 9v1.500" stroke="#445" strokeWidth="1.200" /></Svg>
      <Svg w={13} h={12} c="mr-[3px] ml-[5px]"><circle cx="5" cy="5.500" r="3" stroke="#222" strokeWidth="1.700" /><path d="M5 .5v2M5 8.500v2M0 5.500h2M8 5.500h2M1.500 2L3 3.500M7 7.500L8.500 9M8.500 2L7 3.500M3 7.500L1.500 9" stroke="#222" strokeWidth="1.500" /><path d="M9.500 9h3.500l-1.700 2.500z" fill="#222" /></Svg>
    </div>
  );
}
function Prop({ t, w, children }: { t: string; w: number; children: React.ReactNode }) {
  return (
    <div className="flex h-[18px] shrink-0 items-center">
      <div className="w-[133px] shrink-0 pl-[15px]"><Fit w={w}>{t}</Fit></div>{children}
    </div>
  );
}
function Vec({ t, w, v }: { t: string; w: number; v: string }) {
  return (
    <div className="flex h-[18px] shrink-0 items-center">
      <div className="w-[134px] shrink-0 pl-[15px]"><Fit w={w}>{t}</Fit></div>
      <Fit w={8}>X</Fit><div className={field + "ml-[3px] w-[50px]"}>{v}</div>
      <Fit w={7} c="ml-[4px]">Y</Fit><div className={field + "ml-[4px] w-[51px]"}>{v}</div>
      <Fit w={7} c="ml-[4px]">Z</Fit><div className={field + "ml-[4px] w-[50px]"}>{v}</div>
    </div>
  );
}
const Dot = ({ c = "" }: { c?: string }) => <Svg w={8} c={"ml-[7px] " + c}><circle cx="4" cy="4" r="3" stroke="#222" /><circle cx="4" cy="4" r=".9" fill="#222" /></Svg>;
const vals: [string, number, string, number][] = [["Max Action Clicks", 100, "6", 7], ["Current Image Inde:", 117, "151", 21], ["Action Click Count", 105, "4", 7], ["Day Count", 61, "151", 21], ["Button Clicked Coun", 116, "0", 7]];

function Inspector() {
  return (
    <div className="ml-[2px] flex w-[332px] shrink-0 flex-col">
      <div className="flex h-[17px] shrink-0 items-center">
        <Tab w="w-[99px] border-l"><div className="ml-[8px] flex size-[10px] items-center justify-center rounded-full bg-[#222] font-['Liberation_Serif',serif] text-[9px] font-bold text-[#ccc]">i</div><Fit w={54} c="ml-[5px]">Inspector</Fit></Tab>
        <Fit w={49} c="mt-px ml-[8px] text-[#2a2a2a]">Services</Fit><Lock c="mt-[5px] ml-[142px]" /><Menu c="mt-[7px] ml-[6px]" />
      </div>
      <div className="flex h-[614px] shrink-0 flex-col border-l border-b border-[#6a6a6a] bg-[#9a9a9a]">
        <div className="flex h-[49px] shrink-0 border-y border-t-[#6a6a6a] border-b-[#333] bg-[#b0b0b0]">
          <div className="relative ml-[6px] mt-[7px] h-[22px] w-[22px] shrink-0"><Cube w={22} /><Down c="absolute bottom-[2px] left-[2px]" w={6} /></div>
          <div className="flex flex-col pt-[5px]">
            <div className="flex h-[18px] items-center"><Check c="ml-[15px]" /><div className={field + "ml-[6px] w-[195px]"}><Fit w={91}>GameController</Fit></div><Check on={false} c="ml-[5px]" /><Fit w={32} c="ml-[5px]">Static</Fit><Down c="ml-[6px]" w={8} /></div>
            <div className="mt-[2px] flex h-[18px] items-center">
              <Fit w={20} c="ml-[7px]">Tag</Fit>
              <div className={"ml-[6px] flex h-[14px] w-[116px] items-center justify-between rounded-[3px] border border-[#555] pr-[4px] pl-[5px] text-[10px] " + metal}><Fit w={48}>Untagged</Fit><UpDown /></div>
              <Fit w={32} c="ml-[6px]">Layer</Fit>
              <div className={"ml-[7px] flex h-[14px] w-[103px] items-center justify-between rounded-[3px] border border-[#555] pr-[4px] pl-[5px] text-[10px] " + metal}><Fit w={37}>Default</Fit><UpDown /></div>
            </div>
          </div>
        </div>
        <div className="flex h-[75px] shrink-0 flex-col border-b border-[#4a4a4a] pt-[1px]">
          <Head><Svg w={14} h={14} c="ml-[4px]"><path d="M7 8V1M7 1L5.500 4h3z" stroke="#555" strokeWidth="1.500" /><path d="M7 8l-6 4.500" stroke="#2272cc" strokeWidth="2" /><path d="M7 8l6 4" stroke="#b5525c" strokeWidth="2" /></Svg><Fit w={68} c="mt-[2px] ml-[18px]">Transform</Fit></Head>
          <Vec t="Position" w={43} v="0" /><Vec t="Rotation" w={46} v="0" /><Vec t="Scale" w={30} v="1" />
        </div>
        <div className="flex h-[181px] shrink-0 flex-col border-b border-[#4a4a4a] pt-px">
          <Head><Script w={14} c="ml-[3px]" /><Check c="ml-[4px]" /><Fit w={160} c="mt-[2px] ml-[3px]">Game Controller (Script)</Fit></Head>
          <div className="text-[#666]"><Prop t="Script" w={33}><div className={field + "w-[175px] border-[#8c8c8c]"}><Script w={11} dim /><Fit w={91} c="ml-[2px]">GameController</Fit></div><Dot c="opacity-60" /></Prop></div>
          <Prop t="On Screen" w={60}><div className={field + "w-[175px]"}><Svg w={11}><path d="M0 0h11v11H0z" fill="#3a2c2e" /><path d="M5.500.500h5v5h-5z" fill="#b0aaaa" stroke="#bb5860" /><path d="M0 6h5v5H0z" fill="#c6aaad" /></Svg><Fit w={138} c="ml-[2px]">WorkingScreen (Image)</Fit></div><Dot /></Prop>
          <Prop t="Action Button" w={76}><div className={field + "w-[175px]"}><Svg w={11}><circle cx="5.500" cy="5.500" r="4.800" stroke="#c2616a" fill="#aaa" /><path d="M3 4v3h2V4zM6.500 4v3M8.500 4l-2 1.500 2 1.500" stroke="#777" strokeWidth=".8" /></Svg><Fit w={88} c="ml-[2px]">Button (Button)</Fit></div><Dot /></Prop>
          <Prop t="Action Screen" w={79}><div className={field + "w-[175px]"}><Cube w={11} /><Fit w={75} c="ml-[2px]">ActionScreen</Fit></div><Dot /></Prop>
          {vals.map(([t, w, v, vw]) => <Prop key={t} t={t} w={w}><div className={field + "w-[193px]"}><Fit w={vw}>{v}</Fit></div></Prop>)}
        </div>
        <div className={"mt-[9px] ml-[47px] flex h-[23px] w-[230px] shrink-0 items-center justify-center rounded-[3px] border border-[#555] text-[12px] " + metal}><Fit w={102}>Add Component</Fit></div>
      </div>
    </div>
  );
}

const menu: [string, number, string][] = [["File", 18, "ml-[7px]"], ["Edit", 20, "ml-[14px]"], ["Assets", 33, "ml-[14px]"], ["GameObject", 66, "ml-[14px]"], ["Component", 64, "ml-[14px]"], ["Window", 44, "ml-[14px]"], ["Help", 25, "ml-[14px]"]];

export default function App() {
  return (
    <div className="flex h-[768px] w-[1366px] flex-col overflow-hidden bg-[#828282] font-['DejaVu_Sans',sans-serif] text-[11px] leading-none text-[#111]">
      <header className="flex h-[43px] shrink-0 flex-col bg-white font-['Open_Sans','Noto_Sans',sans-serif] text-[11.700px] text-black">
        <div className="flex h-[23px] items-center"><Unity w={15} c="ml-[2px]" /><Fit w={504} c="ml-[6px]">{"Unity 2017.4.7f1 Personal (64bit) - Main.unity - Overwork - PC, Mac & Linux Standalone <DX11>"}</Fit>
          <Svg w={104} h={12} c="mt-[-3px] ml-[718px]"><path d="M0 6.500h10M45.500 3.500h7v7h-7zM47.500 3.500v-2h7v7h-2M91 1l10 10M101 1L91 11" stroke="#111" /></Svg>
        </div>
        <div className="flex h-[20px] items-center">{menu.map(([t, w, m]) => <Fit key={t} w={w} c={m}>{t}</Fit>)}</div>
      </header>
      <TopToolbar />
      <div className="flex h-[631px] shrink-0">
        <div className="flex w-[701px] shrink-0 flex-col"><ScenePanel /><GamePanel /></div>
        <MiddleColumn />
        <Inspector />
      </div>
      <div className="h-[22px] shrink-0" />
      <footer className="flex h-[40px] shrink-0 items-center bg-[#0b0c0f] pl-px font-['Open_Sans','Noto_Sans',sans-serif] text-[11.700px] text-white">
        <AppIcons s={21} />
        <div className="ml-[467px] flex shrink-0 items-center"><Tray /></div>
        <Fit w={23} c="ml-[14px]">ENG</Fit>
        <div className="ml-[17px] flex shrink-0 flex-col items-center gap-[6px]"><Fit w={42}>1:29 PM</Fit><Fit w={52}>8/08/2018</Fit></div>
        <Svg w={16} h={16} c="ml-[21px]"><path d="M.7.700h14.600v11.600H10l-2 2.700-2-2.700H.7z" stroke="#fff" strokeWidth="1.200" /></Svg>
      </footer>
    </div>
  );
}
